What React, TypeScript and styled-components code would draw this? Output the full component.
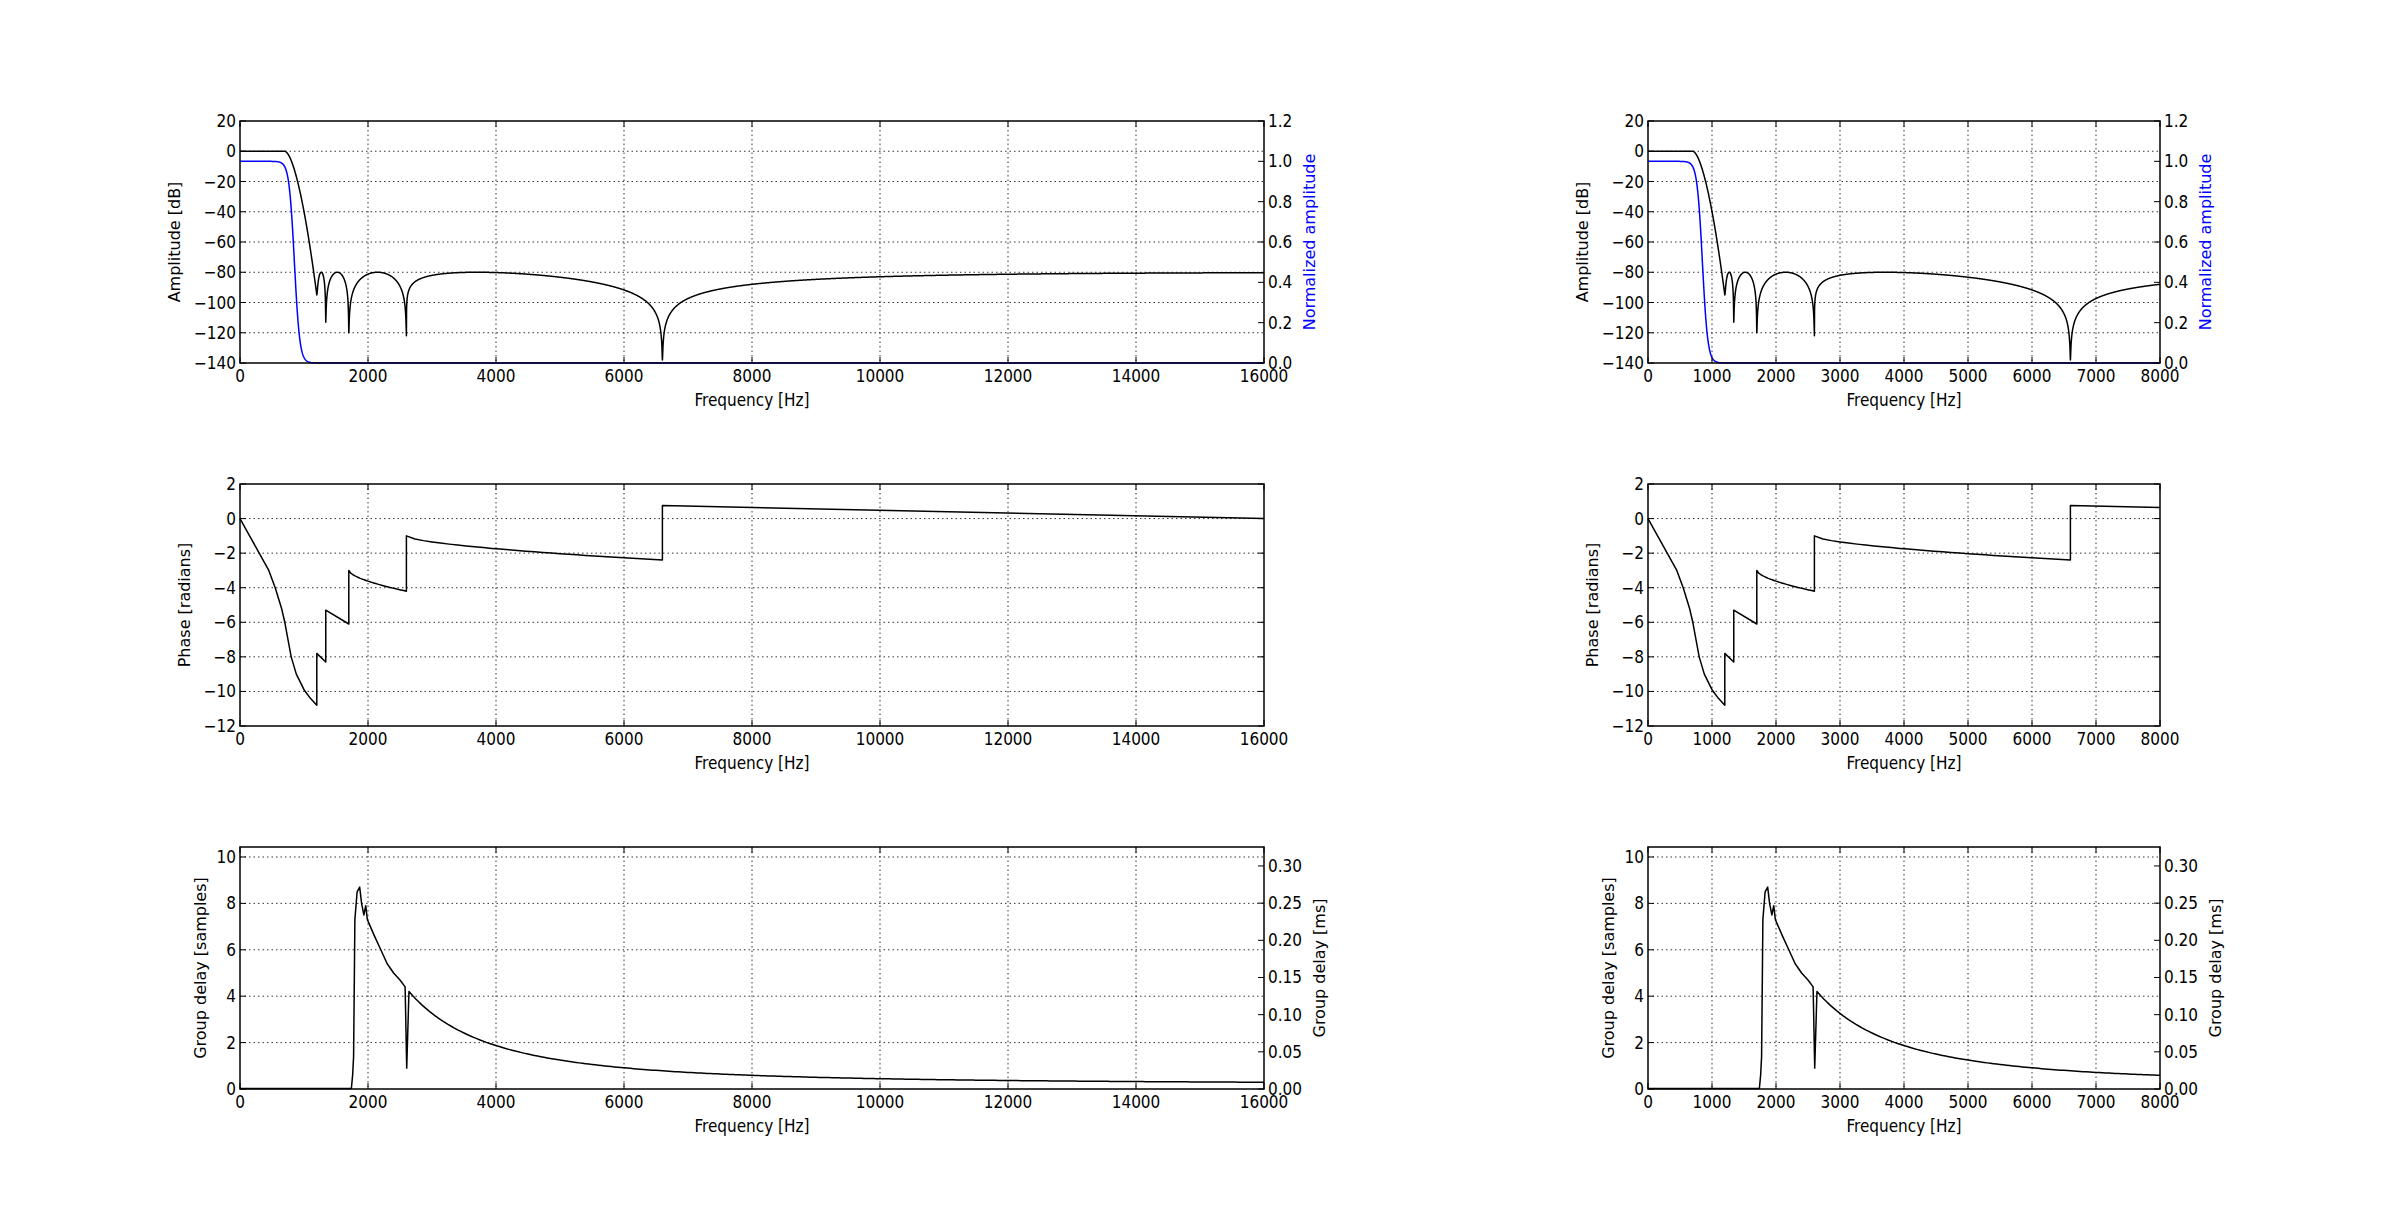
import React from 'react';
import styled, { createGlobalStyle } from 'styled-components';

const GlobalStyle = createGlobalStyle`
  html, body { margin: 0; padding: 0; background: #ffffff; }
  body { font-family: "DejaVu Sans", sans-serif; }
`;

const Figure = styled.div`
  width: 2400px;
  height: 1208px;
  box-sizing: border-box;
  padding: 101px 0 0 160px;
  display: grid;
  grid-template-columns: 1184px 672px;
  grid-auto-rows: 363px;
  column-gap: 224px;
`;

const Svg = styled.svg`
  display: block;
  overflow: visible;
`;

const TickText = styled.text`
  font-family: "DejaVu Sans Condensed", "DejaVu Sans", sans-serif;
  font-stretch: condensed;
  font-size: 17px;
  fill: #000;
`;

const LabelText = styled.text<{ $color?: string }>`
  font-family: "DejaVu Sans", sans-serif;
  font-size: 16px;
  fill: ${(p) => p.$color || '#000'};
`;

const XLabelText = styled(TickText)`
  font-size: 17px;
`;

type Pt = [number, number];

// ---- data ----
const NOTCHES: [number, number][] = [
  [1200, -95],
  [1340, -113],
  [1700, -120],
  [2600, -122],
  [6600, -138],
];

const lobe = (f: number, a: number, b: number, da: number, db: number, p = 1) => {
  const t0 = (f - a) / (b - a);
  const t = Math.pow(Math.max(0, t0), p);
  const s = Math.sin(Math.PI * t);
  const eps = Math.pow(10, ((da + (db - da) * t0) + 80) / 10);
  return -80 + 10 * Math.log10(s * s + eps);
};

const ampDb = (f: number) => {
  if (f < 700) return 0;
  if (f < 1200) return -95 * Math.pow((f - 700) / 500, 1.7);
  if (f < 1340) return lobe(f, 1200, 1340, -95, -113);
  if (f < 1700) return lobe(f, 1340, 1700, -113, -120);
  if (f < 2600) return lobe(f, 1700, 2600, -120, -122);
  if (f < 6600) return lobe(f, 2600, 6600, -122, -138, 0.538);
  const s = 1 - Math.exp(-(f - 6600) / 2750);
  const eps = Math.pow(10, (-138 + 80) / 10);
  return -80 + 10 * Math.log10(s * s + eps);
};

const normAmp = (f: number) => 1 / (1 + Math.exp((f - 850) / 42));

const sample = (fn: (f: number) => number, xMax: number, extra: number[] = []) => {
  const xs: number[] = [];
  const n = 3000;
  for (let i = 0; i <= n; i++) xs.push((i / n) * xMax);
  extra.forEach((e) => e <= xMax && xs.push(e));
  xs.sort((a, b) => a - b);
  return xs.map((x) => [x, fn(x)] as Pt);
};

const ampSeries = (xMax: number) => sample(ampDb, xMax, NOTCHES.map((n) => n[0]));
const normSeries = (xMax: number) => sample(normAmp, xMax);

const curve = (a: number, b: number, ya: number, yb: number, k = 0.6): Pt[] => {
  const pts: Pt[] = [];
  for (let i = 0; i <= 30; i++) {
    const t = i / 30;
    pts.push([a + (b - a) * t, ya + (yb - ya) * Math.pow(t, k)]);
  }
  return pts;
};

const phaseSeries = (xMax: number): Pt[] => {
  const pts: Pt[] = [
    [0, 0], [150, -1], [300, -2], [450, -3], [550, -4], [650, -5.2], [700, -6],
    [760, -7.2], [800, -8], [880, -9], [1000, -9.9], [1100, -10.4], [1200, -10.8],
    [1200, -7.8], [1340, -8.3], [1340, -5.3], [1700, -6.1],
    ...curve(1700, 2600, -3.0, -4.2),
    ...curve(2600, 6600, -1.0, -2.4),
    [6600, 0.75], [16000, 0],
  ];
  return clip(pts, xMax);
};

const groupSeries = (xMax: number): Pt[] => {
  const pts: Pt[] = [
    [0, 0.02], [1740, 0.02], [1760, 0.6], [1775, 1.4], [1795, 7.3], [1830, 8.5],
    [1870, 8.7], [1900, 8.0], [1935, 7.5], [1965, 7.9], [1990, 7.3], [2100, 6.6],
    [2200, 6.0], [2300, 5.4], [2400, 5.0], [2500, 4.7], [2580, 4.4], [2605, 0.9],
    [2640, 4.2],
  ];
  for (let f = 2700; f <= 16000; f += 50) pts.push([f, 0.2 + 4.0 * Math.pow(2640 / f, 2.1)]);
  return clip(pts, xMax);
};

function clip(pts: Pt[], xMax: number): Pt[] {
  const out: Pt[] = [];
  for (let i = 0; i < pts.length; i++) {
    const p = pts[i];
    if (p[0] <= xMax) out.push(p);
    else {
      const q = pts[i - 1];
      if (q && q[0] < xMax) {
        const t = (xMax - q[0]) / (p[0] - q[0]);
        out.push([xMax, q[1] + (p[1] - q[1]) * t]);
      }
      break;
    }
  }
  return out;
}

// ---- chart ----
interface Axis {
  min: number;
  max: number;
  ticks: number[];
  fmt: (v: number) => string;
  label: string;
  offset: number;
  color?: string;
}

interface Series {
  pts: Pt[];
  color: string;
  right?: boolean;
}

interface ChartProps {
  w: number;
  xMax: number;
  xStep: number;
  left: Axis;
  right?: Axis;
  series: Series[];
}

const H = 242;
const ML = 80;
const MT = 20;

const minus = (s: string) => s.replace('-', '\u2212');

const Chart = ({ w, xMax, xStep, left, right, series }: ChartProps) => {
  const sx = (x: number) => ML + (x / xMax) * w;
  const sy = (a: Axis, y: number) => MT + H - ((y - a.min) / (a.max - a.min)) * H;
  const xt: number[] = [];
  for (let x = 0; x <= xMax; x += xStep) xt.push(x);
  const rAxis = right || left;

  return (
    <Svg width={w + 160} height={363}>
      {/* grid */}
      {xt.slice(1, -1).map((x) => (
        <line key={'gx' + x} x1={sx(x)} x2={sx(x)} y1={MT} y2={MT + H} stroke="#000" strokeWidth={0.8} strokeDasharray="1.5 3" />
      ))}
      {left.ticks.filter((y) => y > left.min && y < left.max).map((y) => (
        <line key={'gy' + y} x1={ML} x2={ML + w} y1={sy(left, y)} y2={sy(left, y)} stroke="#000" strokeWidth={0.8} strokeDasharray="1.5 3" />
      ))}
      {/* series */}
      {series.map((s, i) => (
        <polyline
          key={i}
          fill="none"
          stroke={s.color}
          strokeWidth={1.5}
          strokeLinejoin="round"
          points={s.pts
            .map(([x, y]) => {
              const a = s.right && right ? right : left;
              const yy = Math.min(MT + H, Math.max(MT, sy(a, y)));
              return `${sx(x).toFixed(2)},${yy.toFixed(2)}`;
            })
            .join(' ')}
        />
      ))}
      {/* frame */}
      <rect x={ML} y={MT} width={w} height={H} fill="none" stroke="#000" strokeWidth={1.5} />
      {/* x ticks */}
      {xt.map((x) => (
        <g key={'xt' + x}>
          <line x1={sx(x)} x2={sx(x)} y1={MT + H} y2={MT + H - 6} stroke="#000" />
          <line x1={sx(x)} x2={sx(x)} y1={MT} y2={MT + 6} stroke="#000" />
          <TickText x={sx(x)} y={MT + H + 19} textAnchor="middle">{x}</TickText>
        </g>
      ))}
      {/* left ticks */}
      {left.ticks.map((y) => (
        <g key={'yt' + y}>
          <line x1={ML} x2={ML + 6} y1={sy(left, y)} y2={sy(left, y)} stroke="#000" />
          {!right && <line x1={ML + w} x2={ML + w - 6} y1={sy(left, y)} y2={sy(left, y)} stroke="#000" />}
          <TickText x={ML - 4} y={sy(left, y) + 6} textAnchor="end">{minus(left.fmt(y))}</TickText>
        </g>
      ))}
      {right &&
        right.ticks.map((y) => (
          <g key={'rt' + y}>
            <line x1={ML + w} x2={ML + w - 6} y1={sy(rAxis, y)} y2={sy(rAxis, y)} stroke="#000" />
            <TickText x={ML + w + 4} y={sy(rAxis, y) + 6} textAnchor="start">{right.fmt(y)}</TickText>
          </g>
        ))}
      <XLabelText x={ML + w / 2} y={MT + H + 43} textAnchor="middle">Frequency [Hz]</XLabelText>
      <LabelText
        transform={`translate(${ML - left.offset}, ${MT + H / 2}) rotate(-90)`}
        textAnchor="middle"
        dominantBaseline="central"
      >
        {left.label}
      </LabelText>
      {right && (
        <LabelText
          $color={right.color}
          transform={`translate(${ML + w + right.offset}, ${MT + H / 2}) rotate(-90)`}
          textAnchor="middle"
          dominantBaseline="central"
        >
          {right.label}
        </LabelText>
      )}
    </Svg>
  );
};

const range = (a: number, b: number, s: number) => {
  const r: number[] = [];
  for (let v = a; v <= b + 1e-9; v += s) r.push(Math.round(v * 1000) / 1000);
  return r;
};

const ampLeft: Axis = { min: -140, max: 20, ticks: range(-140, 20, 20), fmt: (v) => String(v), label: 'Amplitude [dB]', offset: 66 };
const ampRight: Axis = { min: 0, max: 1.2, ticks: range(0, 1.2, 0.2), fmt: (v) => v.toFixed(1), label: 'Normalized amplitude', offset: 45, color: '#0000ff' };
const phaseLeft: Axis = { min: -12, max: 2, ticks: range(-12, 2, 2), fmt: (v) => String(v), label: 'Phase [radians]', offset: 56 };
const gdLeft: Axis = { min: 0, max: 10.43, ticks: range(0, 10, 2), fmt: (v) => String(v), label: 'Group delay [samples]', offset: 40 };
const gdRight: Axis = { min: 0, max: 0.3255, ticks: range(0, 0.3, 0.05), fmt: (v) => v.toFixed(2), label: 'Group delay [ms]', offset: 55 };

const App = () => {
  const cols = [
    { w: 1024, xMax: 16000, xStep: 2000 },
    { w: 512, xMax: 8000, xStep: 1000 },
  ];
  return (
    <>
      <GlobalStyle />
      <Figure>
        {cols.map((c) => (
          <Chart key={'a' + c.xMax} {...c} left={ampLeft} right={ampRight}
            series={[{ pts: ampSeries(c.xMax), color: '#000' }, { pts: normSeries(c.xMax), color: '#0000ff', right: true }]} />
        ))}
        {cols.map((c) => (
          <Chart key={'p' + c.xMax} {...c} left={phaseLeft} series={[{ pts: phaseSeries(c.xMax), color: '#000' }]} />
        ))}
        {cols.map((c) => (
          <Chart key={'g' + c.xMax} {...c} left={gdLeft} right={gdRight} series={[{ pts: groupSeries(c.xMax), color: '#000' }]} />
        ))}
      </Figure>
    </>
  );
};

export default App;
